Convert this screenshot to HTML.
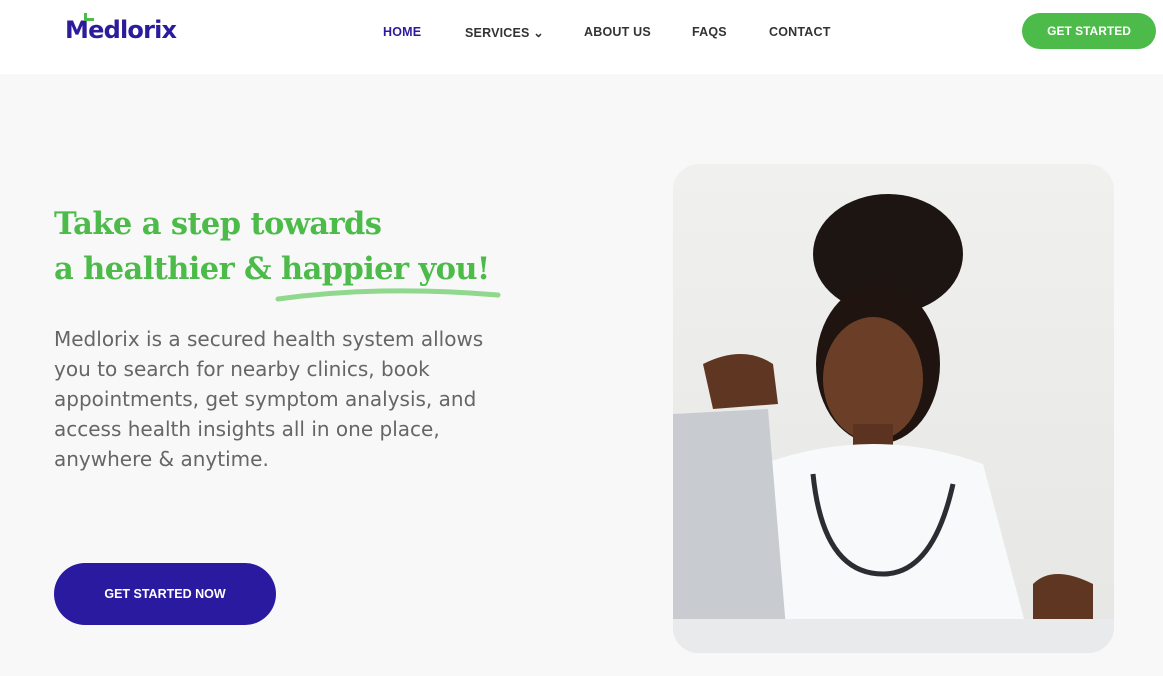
<!DOCTYPE html>
<html><head><meta charset="utf-8"><style>
*{margin:0;padding:0;box-sizing:border-box}
body{width:1163px;height:676px;overflow:hidden;background:#f8f8f8;font-family:"Liberation Sans",sans-serif;position:relative}
.nav{position:absolute;left:0;top:0;width:1163px;height:74px;background:#fff}
.logo{position:absolute;left:65px;top:16px;font-family:"DejaVu Sans",sans-serif;font-size:24px;font-weight:bold;color:#2c1c9c;letter-spacing:-0.8px}
.nav a{position:absolute;top:25px;font-size:12.5px;font-weight:bold;color:#333;text-decoration:none;letter-spacing:.2px}
.gs{position:absolute;left:1022px;top:13px;width:134px;height:36px;border-radius:18px;background:#4cbb4a;color:#fff;font-size:12px;font-weight:bold;text-align:center;line-height:36px}
h1{position:absolute;left:54px;top:202px;font-family:"DejaVu Serif",serif;font-weight:bold;font-size:30.5px;line-height:45px;color:#4cbb4a;letter-spacing:-0.6px;white-space:nowrap}
p{position:absolute;left:54px;top:324px;width:460px;font-family:"DejaVu Sans",sans-serif;font-size:20px;line-height:30px;color:#666}
.btn{position:absolute;left:54px;top:563px;width:222px;height:62px;border-radius:31px;background:#2a1aa0;color:#fff;font-size:12.5px;font-weight:bold;text-align:center;line-height:62px}
.photo{position:absolute;left:673px;top:164px;width:441px;height:489px;border-radius:26px;overflow:hidden;background:linear-gradient(#f0f0ee,#e6e6e4)}
</style></head><body>
<div class="nav">
<div class="logo">M<span style="position:relative">e<span style="position:absolute;left:-4px;top:-3px;width:10px;height:8px;border-left:3px solid #4cbb4a;border-bottom:3px solid #4cbb4a"></span></span>dlorix</div>
<a style="left:383px;color:#2c1c9c">HOME</a>
<a style="left:465px">SERVICES ⌄</a>
<a style="left:584px">ABOUT US</a>
<a style="left:692px">FAQS</a>
<a style="left:769px">CONTACT</a>
<div class="gs">GET STARTED</div>
</div>
<h1>Take a step towards<br>a healthier &amp; happier you!</h1>
<svg style="position:absolute;left:270px;top:285px" width="235" height="20"><path d="M8 14 Q110 0 228 10" stroke="#8fd88d" stroke-width="5" fill="none" stroke-linecap="round"/></svg>
<p>Medlorix is a secured health system allows you to search for nearby clinics, book appointments, get symptom analysis, and access health insights all in one place, anywhere &amp; anytime.</p>
<div class="btn">GET STARTED NOW</div>
<div class="photo">
<svg width="441" height="489">
<ellipse cx="215" cy="90" rx="75" ry="60" fill="#1d1511"/>
<ellipse cx="205" cy="200" rx="62" ry="80" fill="#1f1410"/>
<ellipse cx="200" cy="215" rx="50" ry="62" fill="#6b3e27"/>
<rect x="180" y="260" width="40" height="50" fill="#5c3320"/>
<path d="M70 489 L90 300 Q200 260 310 300 L360 489 Z" fill="#f7f9fa"/>
<path d="M0 250 L95 245 L115 489 L0 489 Z" fill="#c8ccd0"/>
<path d="M30 200 Q70 180 100 200 L105 240 L40 245 Z" fill="#5f3621"/>
<path d="M140 310 Q150 410 210 410 Q260 410 280 320" stroke="#2a2e33" stroke-width="5" fill="none"/>
<path d="M360 420 Q380 400 420 420 L420 460 L360 460 Z" fill="#5f3621"/>
<rect x="0" y="455" width="441" height="34" fill="#e8eaec"/>
</svg>
</div>
</body></html>
